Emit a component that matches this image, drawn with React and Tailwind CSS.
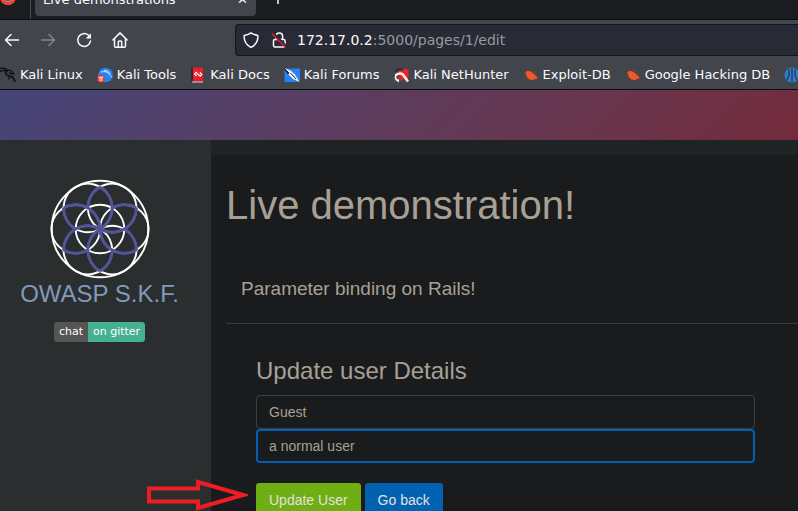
function FirefoxIcon() {
  return (
    <svg viewBox="0 0 16 16" className="size-4 shrink-0" aria-hidden="true">
      <circle cx="8" cy="8" r="8" fill="#ff4f2e" />
      <path d="M1 9a7 7 0 0 0 14 0z" fill="#f0452a" />
      <path d="M3 5c2-2 7-3 10 1 1 5-2 7-5 7S3 11 3 5z" fill="#ff8a1f" />
      <circle cx="8" cy="9" r="3.6" fill="#5b5bd6" />
    </svg>
  );
}

function ArrowIcon({ flipped }) {
  return (
    <svg viewBox="0 0 16 16" className="size-4" fill="none" stroke="currentColor" strokeWidth="1.5" strokeLinecap="round" strokeLinejoin="round" aria-hidden="true">
      <path d={flipped ? "M1.500 8h13M9 2.500 14.500 8 9 13.500" : "M14.500 8h-13M7 2.500 1.500 8 7 13.500"} />
    </svg>
  );
}

function ReloadIcon() {
  return (
    <svg viewBox="0 0 16 16" className="size-4" fill="none" stroke="#fbfbfe" strokeWidth="1.5" strokeLinecap="round" aria-hidden="true">
      <path d="M12.500 3.300A6.400 6.400 0 1 0 14.500 9" />
      <path d="M15 1.200v5.300H9.700z" fill="#fbfbfe" stroke="none" />
    </svg>
  );
}

function HomeIcon() {
  return (
    <svg viewBox="0 0 16 16" className="size-4" fill="none" stroke="#fbfbfe" strokeWidth="1.5" strokeLinejoin="round" strokeLinecap="round" aria-hidden="true">
      <path d="M.9 8 8 .9 15.100 8" />
      <path d="M2.500 7v6.900c0 .7.500 1.300 1.200 1.300h8.600c.7 0 1.200-.6 1.200-1.300V7" />
      <path d="M6.300 15V10c0-.6.4-1 1-1h1.400c.6 0 1 .4 1 1v5" />
    </svg>
  );
}

function ShieldIcon() {
  return (
    <svg viewBox="0 0 16 16" className="size-4" fill="none" stroke="#fbfbfe" strokeWidth="1.5" strokeLinejoin="round" aria-hidden="true">
      <path d="M8 .8C9.500 2 12 2.900 14.800 3.500c.3 3.600-1 9-6.800 11.900C2.200 12.500.9 7.100 1.200 3.500 4 2.900 6.500 2 8 .8z" />
    </svg>
  );
}

function BrokenLockIcon() {
  return (
    <svg viewBox="0 0 16 16" className="size-4" fill="none" aria-hidden="true">
      <path d="M5 7.500V4.200a3.300 3.300 0 0 1 6.600 0v3.300" stroke="#fbfbfe" strokeWidth="1.500" />
      <rect x="2.500" y="7.600" width="11.600" height="7.400" rx="1.500" stroke="#fbfbfe" strokeWidth="1.500" />
      <path d="M1.800 1 15.500 14.700" stroke="#282a36" strokeWidth="2.500" />
      <path d="M.8 1.500 14.300 15.300" stroke="#e81c2c" strokeWidth="1.500" />
    </svg>
  );
}

function DragonIcon() {
  return (
    <svg viewBox="0 0 16 16" className="size-4 shrink-0" fill="none" stroke="#111318" aria-hidden="true">
      <path d="M0 1.500C3 .8 6 1.500 8.500 3.500M0 4.500c2.500-1.500 5-1.200 7.500.3" strokeWidth="1.500" />
      <path d="M7 3.500C4.500 6 6 8.800 9.500 9c3 .2 4.500 1.500 5.500 6" strokeWidth="1.800" />
      <path d="M8 3.500c2-.5 4 .5 5.500 3M9 6l3.500.8 2 .2M10 10.500c-1 .4-1.500 1-1.500 2" strokeWidth="1.400" />
    </svg>
  );
}

function ToolsIcon() {
  return (
    <svg viewBox="0 0 16 16" className="size-4 shrink-0" aria-hidden="true">
      <circle cx="8.500" cy="8" r="7.300" fill="#2583f5" />
      <path d="M4 5c4-1 7 0 8 2s2 1.500 3 3.500M7 3.500c3 0 5 1 6 3" fill="none" stroke="#dcebff" strokeWidth="1" />
      <circle cx="3.800" cy="11.700" r="3.800" fill="#e63428" />
      <path d="M1.500 10.200h4.800M3 10.200v4M4.900 10.200v4" stroke="#fff" strokeWidth="1" fill="none" />
    </svg>
  );
}

function DocsIcon() {
  return (
    <svg viewBox="0 0 16 16" className="size-4 shrink-0" aria-hidden="true">
      <path d="M1 .5h2.500v14H1z" fill="#35263f" />
      <path d="M3 .5h10v14H3z" fill="#ee1c25" />
      <path d="M2 14.500h11v1H2z" fill="#d8d8d8" />
      <path d="M6.500 4.800 4.500 7l2 2M9.800 5.500l2 2-2 2.200M6 5.500l4.300 3.800" stroke="#fff" strokeWidth="1.100" fill="none" />
    </svg>
  );
}

function ForumsIcon() {
  return (
    <svg viewBox="0 0 16 16" className="size-4 shrink-0" aria-hidden="true">
      <path d="M.500 1.500H16V13l-3 2H.500z" fill="#2583f5" />
      <path d="M0 1l6.500 2.500 4.500 4 4.500 7.500L9 12 4 7z" fill="#f4f4f4" />
      <path d="M0 1l4 6 1-1L2 3zM6.500 6l5.500 6" stroke="#22252c" strokeWidth="1" fill="#22252c" />
    </svg>
  );
}

function NetHunterIcon() {
  return (
    <svg viewBox="0 0 16 16" className="size-4 shrink-0" fill="none" aria-hidden="true">
      <path d="M5 2h10.500v9L13 14 6 8z" fill="#e8242b" />
      <path d="M2 4 7 2l3 1" stroke="#25272e" strokeWidth="1.500" />
      <path d="M6 14c-4.500-.5-5.500-5-1.500-7 3-1.200 5.500 0 6.500 2l4 5.500" stroke="#f7f7f7" strokeWidth="2.400" />
      <path d="M4.500 10.500c2-2 4-1.500 5 0l1 2-3 1.500z" fill="#e8242b" />
      <path d="M1.500 8c-1 3 .5 6 3 7" stroke="#25272e" strokeWidth="1" />
    </svg>
  );
}

function BugIcon() {
  return (
    <svg viewBox="0 0 16 16" className="size-4 shrink-0" aria-hidden="true">
      <path d="M.500 5l3 1.500M3.500 2l1.500 3M8 2l1.500 2.500M13 4l-2 2.500M15.500 9H12M.500 9l4 .5M4.500 13.500 7 11M14.500 14l-3-2" stroke="#7a3f33" strokeWidth="1" />
      <path d="M2.500 5.500C3.500 3.800 6 3.500 8.500 5l3 2.500 3 3-1 1.500-2-.3L11 13c-3 .5-6-1-7-3z" fill="#f05a28" />
    </svg>
  );
}

function OffSecIcon() {
  return (
    <svg viewBox="0 0 16 16" className="size-4 shrink-0" aria-hidden="true">
      <circle cx="8" cy="8" r="7.500" fill="#2f7ed0" />
      <path d="M5 2v6L3 13M8 1v14M11 2v6l2 5" stroke="#2b3550" strokeWidth="1.300" fill="none" />
    </svg>
  );
}

const bookmarks = [
  { label: "Kali Linux", Icon: DragonIcon },
  { label: "Kali Tools", Icon: ToolsIcon },
  { label: "Kali Docs", Icon: DocsIcon },
  { label: "Kali Forums", Icon: ForumsIcon },
  { label: "Kali NetHunter", Icon: NetHunterIcon },
  { label: "Exploit-DB", Icon: BugIcon },
  { label: "Google Hacking DB", Icon: BugIcon },
];

const turns = [0, 60, 120, 180, 240, 300];

function FlowerLogo() {
  return (
    <svg viewBox="-50 -50 100 100" className="size-[100px]" fill="none" role="img" aria-label="OWASP S.K.F. logo">
      <g stroke="#ffffff" strokeWidth="1.900">
        <circle r="48.300" />
        <circle r="24.300" />
        {turns.map((a) => (
          <circle key={a} cx="24.300" r="24.300" transform={`rotate(${a})`} />
        ))}
      </g>
      <g stroke="#52549a" strokeWidth="2.900">
        {turns.map((a) => (
          <path
            key={a}
            d="M0 0A24.300 24.300 0 0 0 36.450 21.040M12.150 -21.040A24.300 24.300 0 0 1 36.450 -21.040"
            transform={`rotate(${a})`}
          />
        ))}
        <circle r="2" fill="#52549a" />
      </g>
    </svg>
  );
}

function BrowserChrome() {
  return (
    <header className="font-['DejaVu_Sans',sans-serif] text-[#fbfbfe]">
      <div className="flex h-5 items-end overflow-hidden border-b border-[#0c0c0d] bg-[#1b1c20]">
        <div className="flex h-10 w-[31px] shrink-0 items-center border-r border-[#4a4a52] pb-1">
          <FirefoxIcon />
        </div>
        <div className="ml-1 h-9 w-[221px] pb-[3px]">
          <div className="flex h-full items-center justify-between rounded bg-[#43454c] px-2 text-[13px]">
            <span>Live demonstrations</span>
            <button aria-label="Close tab">✕</button>
          </div>
        </div>
        <button aria-label="New tab" className="ml-3.5 h-10 pb-1">
          <svg viewBox="0 0 16 16" className="size-4" stroke="#fbfbfe" strokeWidth="1.500" aria-hidden="true">
            <path d="M8 1v14M1 8h14" />
          </svg>
        </button>
      </div>
      <div className="flex h-10 items-center bg-[#43454c]">
        <nav className="flex w-[235px] shrink-0 items-center gap-5 pl-1">
          <button aria-label="Back"><ArrowIcon /></button>
          <button aria-label="Forward" className="text-[#85868b]"><ArrowIcon flipped /></button>
          <button aria-label="Reload"><ReloadIcon /></button>
          <button aria-label="Home"><HomeIcon /></button>
        </nav>
        <div className="flex h-8 flex-1 items-center gap-3 rounded-l border border-r-0 border-[#15161c] bg-[#282a36] pl-[7px]">
          <ShieldIcon />
          <BrokenLockIcon />
          <a href="#address" className="-ml-0.5 whitespace-nowrap text-sm text-[#9a9a9c]">
            <span className="text-[#fbfbfe]">172.17.0.2</span>:5000/pages/1/edit
          </a>
        </div>
      </div>
      <nav className="flex h-[30px] items-center gap-3.5 overflow-hidden border-b border-[#0c0c0d] bg-[#43454c] text-[13px]">
        {bookmarks.map(({ label, Icon }) => (
          <a key={label} href="#bookmark" className="flex shrink-0 items-center gap-1 whitespace-nowrap">
            <Icon />
            {label}
          </a>
        ))}
        <a href="#bookmark" aria-label="OffSec" className="shrink-0">
          <OffSecIcon />
        </a>
      </nav>
    </header>
  );
}

function Sidebar() {
  return (
    <aside className="flex w-[211px] shrink-0 flex-col items-center bg-[#2a2e2f] pr-3 pt-[39px]">
      <FlowerLogo />
      <a href="#home" className="text-2xl leading-[30px] text-[#8099bd]">OWASP S.K.F.</a>
      <a
        href="#chat"
        className="mt-[13px] flex h-5 overflow-hidden rounded-[3px] font-['DejaVu_Sans',sans-serif] text-[11px] leading-5 text-white"
      >
        <span className="bg-[#555555] px-[5px]">chat</span>
        <span className="bg-[#46b092] px-[5px]">on gitter</span>
      </a>
    </aside>
  );
}

function PointerArrow() {
  return (
    <svg viewBox="0 0 102 32" className="absolute -left-[110px] -top-1 h-8 w-[102px]" fill="none" aria-hidden="true">
      <path d="M3 9.500H52V3L97 16 52 29V22.500H3z" stroke="#ee1c24" strokeWidth="4" />
    </svg>
  );
}

function EditForm() {
  const field = "block h-[34px] w-full rounded bg-transparent px-3 text-sm text-[#a8a095] outline-none";
  return (
    <form className="pl-[30px] pr-[28px] pt-[31px]" onSubmit={(e) => e.preventDefault()}>
      <h3 className="text-2xl leading-8">Update user Details</h3>
      <div className="mt-2">
        <input aria-label="User name" defaultValue="Guest" className={`${field} border border-[#3c3f41]`} />
        <input aria-label="Description" defaultValue="a normal user" className={`${field} border-2 border-[#0060b5] px-[11px]`} />
      </div>
      <div className="relative mt-5 flex gap-1 text-sm text-[#e4e1dc]">
        <button type="submit" className="h-[34px] rounded-[3px] bg-[#6fae15] px-[13px]">Update User</button>
        <button type="button" className="h-[34px] rounded-[3px] bg-[#0062b1] px-[13px]">Go back</button>
        <PointerArrow />
      </div>
    </form>
  );
}

export default function App() {
  return (
    <div className="flex h-screen flex-col overflow-hidden bg-[#1a1b1c] font-['Liberation_Sans',Arial,sans-serif]">
      <BrowserChrome />
      <div className="h-[50px] shrink-0 bg-linear-135 from-[#444478] to-[#742b3c]" />
      <div className="flex min-h-0 flex-1">
        <Sidebar />
        <main className="min-w-0 flex-1 text-[#a8a095]">
          <div className="h-[15px] bg-[#1f2324]" />
          <div className="pl-[15px]">
            <h1 className="pt-[25px] text-[40px] leading-[50px]">Live demonstration!</h1>
            <p className="pl-[15px] pt-[47px] text-[19px] leading-6">Parameter binding on Rails!</p>
            <hr className="mt-[22px] border-[#3a3c3d]" />
            <div className="pr-[15px]">
              <EditForm />
            </div>
          </div>
        </main>
      </div>
    </div>
  );
}
